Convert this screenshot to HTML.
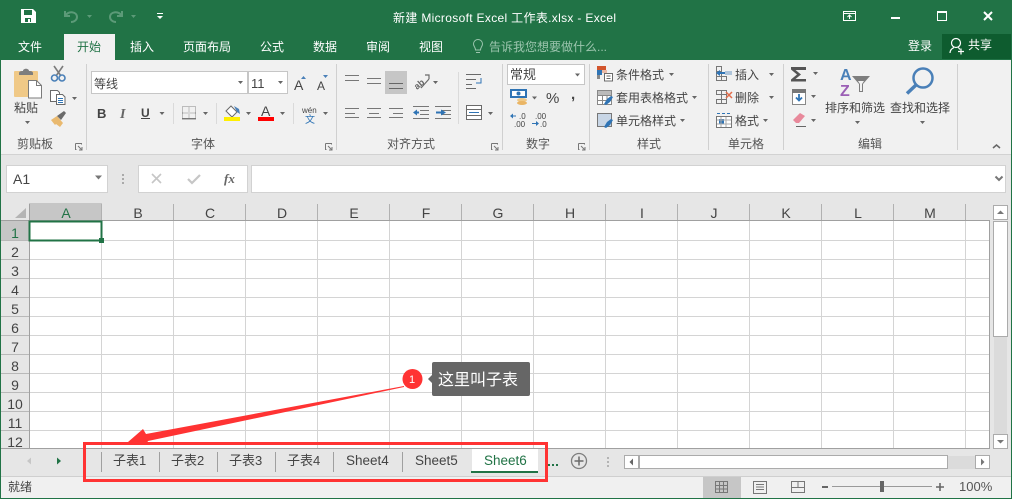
<!DOCTYPE html>
<html><head><meta charset="utf-8"><style>
html,body{margin:0;padding:0;background:#f1f1f1;width:1012px;height:499px;overflow:hidden}
svg{display:block}
text{font-family:"Liberation Sans","Noto Sans CJK SC",sans-serif;font-size:12px;fill:#444}
.h text{font-size:14px;fill:#444;text-anchor:middle}
.tab text{font-size:13px;fill:#444}
</style></head><body>
<svg width="1012" height="499" viewBox="0 0 1012 499" xmlns="http://www.w3.org/2000/svg">
<!-- base -->
<rect width="1012" height="499" fill="#e6e6e6"/>
<rect y="0" width="1012" height="60" fill="#217346"/>
<rect y="60" width="1012" height="94" fill="#f1f1f1"/>
<rect y="154" width="1012" height="1" fill="#d2d2d2"/>
<rect x="64" y="34" width="51" height="26" fill="#f1f1f1"/>
<rect x="942" y="34" width="69" height="25" fill="#0e5c2f"/>
<!-- title bar -->
<path d="M21 9h12l3 3v11H21z M24 10v5h8v-5z M25 18v4h6v-4z" fill="#fff" fill-rule="evenodd"/>
<rect x="28" y="19" width="2" height="3" fill="#fff"/>
<g fill="none" stroke="#5c9a78" stroke-width="2"><path d="M65 11v5h5M65 16c4-6 12-4 12 1 0 3-3 5-6 5"/><path d="M122 11v5h-5M122 16c-4-6-12-4-12 1 0 3 3 5 6 5"/></g>
<path d="M87 15h5l-2.500 3zM131 15h5l-2.500 3z" fill="#5c9a78"/>
<path d="M157 13h6v1h-6zM157 16h6l-3 3z" fill="#fff"/>
<text x="393" y="22" style="fill:#fff" textLength="223" lengthAdjust="spacing">新建 Microsoft Excel 工作表.xlsx - Excel</text>
<g fill="none" stroke="#fff"><rect x="843.500" y="11.500" width="12" height="9"/><path d="M843 13.500h13M849.500 19v-4M847.500 17l2-2 2 2"/></g>
<rect x="891" y="17" width="9" height="2" fill="#fff"/>
<path d="M937.500 11.500h9v9h-9z" fill="none" stroke="#fff"/><rect x="937" y="11" width="10" height="2" fill="#fff"/>
<path d="M984 12l8 8M992 12l-8 8" stroke="#fff" stroke-width="2" fill="none"/>
<!-- tabs -->
<text x="18" y="51" style="fill:#fff">文件</text>
<text x="130" y="51" style="fill:#fff">插入</text>
<text x="183" y="51" style="fill:#fff">页面布局</text>
<text x="260" y="51" style="fill:#fff">公式</text>
<text x="313" y="51" style="fill:#fff">数据</text>
<text x="366" y="51" style="fill:#fff">审阅</text>
<text x="419" y="51" style="fill:#fff">视图</text>
<text x="908" y="50" style="fill:#fff">登录</text>
<text x="968" y="49" style="fill:#fff">共享</text>
<text x="77" y="51" style="fill:#217346">开始</text>
<text x="489" y="51" style="fill:#9cc5ae">告诉我您想要做什么...</text>
<g fill="none" stroke="#9cc5ae"><path d="M475.500 50c0-3-2-3.500-2-6a4.500 4.500 0 0 1 9 0c0 2.500-2 3-2 6z"/><path d="M476 52.500h4"/></g>
<g fill="none" stroke="#fff" stroke-width="1.200"><circle cx="956" cy="43" r="4.500"/><path d="M950 53c0-4 3-5 4-5.500M958 47.500c1 .5 1.500 1 2 2"/><path d="M958 51.500h6M961 48.500v6"/></g>
<!-- ribbon separators -->
<path d="M86.500 64v86M336.500 64v86M502.500 64v86M589.500 64v86M708.500 64v86M783.500 64v86M957.500 64v86" stroke="#d0d0d0" fill="none"/>
<path d="M173.500 103v21M216.500 103v21M293.500 103v21M458.500 72v52" stroke="#dadada" fill="none"/>
<!-- clipboard -->
<rect x="14" y="71" width="24" height="26" rx="1" fill="#f0c987"/>
<path d="M19 73c0-2 3-2 4-2 0-3 6-3 6 0 1 0 4 0 4 2v2H19z" fill="#7e7e7e"/>
<path d="M28.500 80.500h8l5 5v12.500h-13z" fill="#fff" stroke="#7b7b7b"/><path d="M36.500 80.500v5h5" fill="none" stroke="#7b7b7b"/>
<text x="14" y="112">粘贴</text>
<g fill="none" stroke="#7b7b7b" stroke-width="1.600"><path d="M54 66l7 10M63 66l-7 10" /></g>
<g fill="none" stroke="#4a80b8" stroke-width="1.600"><circle cx="54.500" cy="78" r="3"/><circle cx="62" cy="78" r="3"/></g>
<path d="M50.500 90.500h7l2 2v2h-3v7h-6z" fill="#fff" stroke="#6a6a6a"/>
<path d="M56.500 94.500h6l2.500 2.500v7.500h-8.500z" fill="#fff" stroke="#6a6a6a"/>
<path d="M58 98.500h5M58 100.500h5M58 102.500h5" stroke="#2f74b5"/>
<path d="M51 120l6-4 6 7-3 4-4-3-1 1z" fill="#e9b96f"/><path d="M57 116l7-5 2 2-5 7z" fill="#6a6a6a"/>
<!-- font -->
<rect x="91.500" y="71.500" width="156" height="22" fill="#fff" stroke="#c6c6c6"/>
<rect x="248.500" y="71.500" width="39" height="22" fill="#fff" stroke="#c6c6c6"/>
<text x="94" y="88" style="font-size:12px">等线</text>
<text x="251" y="88" style="font-size:13px">11</text>
<text x="294" y="90" style="font-size:14px">A</text><text x="317" y="90" style="font-size:12px">A</text>
<path d="M301 79h5l-2.500-3zM323 75h5l-2.500 3z" fill="#4a80b8"/>
<text x="97" y="118" style="font-weight:bold;font-size:13px">B</text>
<text x="120" y="118" style="font-style:italic;font-family:'Liberation Serif',serif;font-size:14px;font-weight:bold;fill:#666">I</text>
<text x="141" y="117" style="font-weight:bold;font-size:12px">U</text><rect x="141" y="118" width="9" height="1" fill="#444"/>
<path d="M182.500 106.500h13v13h-13z M189 106.500v13M182.500 113h13" fill="none" stroke="#888" stroke-dasharray="1 1"/><rect x="182" y="118" width="14" height="1" fill="#777"/>
<path d="M226 111l5-5 6 6-5 5z" fill="#fff" stroke="#6a6a6a"/><path d="M234 106l5 3 1 5-3-2z" fill="#4a80b8"/>
<rect x="224" y="117" width="16" height="4" fill="#ffef00"/>
<text x="261" y="116" style="font-size:14px">A</text><rect x="258" y="117" width="16" height="4" fill="#f00"/>
<text x="302" y="113" style="font-size:8px">wén</text><text x="305" y="123" style="font-size:10px;fill:#2f74b5">文</text>
<!-- align -->
<rect x="385" y="71" width="22" height="23" fill="#c6c6c6"/>
<path d="M345 75.500h14M345 80.500h14M367 78.500h14M367 83.500h14" stroke="#777" fill="none"/>
<path d="M389 83.500h14M389 88.500h14" stroke="#666" fill="none"/>
<path d="M345 108.500h14M345 113.500h10M345 117.500h14M367 108.500h14M369 113.500h10M367 117.500h14M389 108.500h14M393 113.500h10M389 117.500h14" stroke="#777" fill="none"/>
<text transform="translate(417 90) rotate(-40)" style="font-size:9px;font-weight:bold;fill:#666">ab</text>
<path d="M421 88l8-9M425 75l4 0 0 4" stroke="#6a6a6a" fill="none" stroke-width="1.200"/>
<path d="M413 106.500h16M420 110.500h9M420 114.500h9M413 118.500h16M435 106.500h16M442 110.500h9M442 114.500h9M435 118.500h16" stroke="#777" fill="none"/>
<path d="M413 112.500l4-3v2h2v2h-2v2zM446 112.500l-5-3v2h-5v2h5v2z" fill="#2f74b5"/>
<path d="M466 74.500h15M466 79.500h10M466 84.500h6M466 88.500h10" stroke="#6a6a6a" fill="none"/>
<path d="M481 78v5h-5" stroke="#2f74b5" fill="none"/>
<rect x="466.500" y="105.500" width="15" height="14" fill="#fff" stroke="#6a6a6a"/>
<path d="M467 109.500h14M467 115.500h14" stroke="#6a6a6a" fill="none"/><path d="M469 112.500h10" stroke="#2f74b5" fill="none"/>
<!-- number -->
<rect x="507.500" y="64.500" width="77" height="20" fill="#fff" stroke="#c6c6c6"/>
<text x="510" y="79" style="font-size:13px">常规</text>
<rect x="511" y="90" width="15" height="7" fill="#fff" stroke="#2f74b5" stroke-width="2"/>
<circle cx="518.500" cy="93.500" r="2" fill="#2f74b5"/>
<ellipse cx="522" cy="100" rx="5" ry="2" fill="#f0c987"/><ellipse cx="522" cy="103" rx="5" ry="2" fill="#eab565"/>
<text x="546" y="103" style="font-size:15px">%</text>
<text x="571" y="99" style="font-weight:bold;font-size:15px">,</text>
<text x="519" y="119" style="font-size:8px">.0</text><text x="514" y="127" style="font-size:8px">.00</text>
<text x="535" y="119" style="font-size:8px">.00</text><text x="540" y="127" style="font-size:8px">.0</text>
<path d="M510 116l3-2.500v2h3v1h-3v2zM539 123.500l-3-2.500v2h-4v1h4v2z" fill="#2f74b5"/>
<!-- styles -->
<rect x="597" y="66" width="9" height="4" fill="#d2552d"/><rect x="597" y="70" width="5" height="5" fill="#2f74b5"/><rect x="602" y="70" width="5" height="3" fill="#eab9a5"/><rect x="597" y="75" width="3" height="4" fill="#888"/>
<rect x="604.500" y="73.500" width="8" height="7.500" fill="#fff" stroke="#6a6a6a"/><path d="M606.500 76h4M606.500 78.500h4" stroke="#666"/>
<path d="M597.500 90.500h14v14h-14zM597.500 95.500h14M597.500 100.500h14M602.500 90.500v14M607 90.500v14" fill="#fff" stroke="#888"/><rect x="598" y="91" width="13" height="4" fill="#bbb"/>
<path d="M604 104l3-5 4-3 2 1-3 5-4 3z" fill="#2f74b5"/>
<rect x="597.500" y="113.500" width="14" height="13" fill="#c8d6e6" stroke="#777"/>
<path d="M604 127l3-5 4-3 2 1-3 5-4 3z" fill="#2f74b5"/>
<text x="616" y="79">条件格式</text><text x="616" y="102">套用表格格式</text><text x="616" y="125">单元格样式</text>
<!-- cells -->
<path d="M716.500 66.500h5v5h-5zM716.500 71.500h5v5h-5zM716.500 76.500h5v4h-5zM721.500 76.500h5v4h-5z" fill="none" stroke="#777"/>
<rect x="725" y="71" width="7" height="4" fill="#aec4da"/><path d="M716 73l4-3v2h5v2h-5v2z" fill="#2f74b5"/>
<path d="M716.500 90.500h5v4h-5zM721.500 90.500h5v4h-5zM716.500 99.500h5v4h-5zM721.500 99.500h5v4h-5zM721.500 94.500h5v5h-5z" fill="none" stroke="#777"/>
<path d="M726 92l6 6M732 92l-6 6" stroke="#e46c4a" stroke-width="1.500"/>
<rect x="716.500" y="116.500" width="15" height="11" fill="#fff" stroke="#777"/><rect x="719" y="119" width="5" height="5" fill="#2f74b5"/>
<path d="M717 120h14M717 124h14M721 117v10M726 117v10" stroke="#aaa"/>
<path d="M717 113.500h14" stroke="#2f74b5" stroke-dasharray="3 2"/>
<text x="735" y="79">插入</text><text x="735" y="102">删除</text><text x="735" y="125">格式</text>
<!-- editing -->
<path d="M791 67h15v3h-10.500l5.500 4.500-5.500 4.500h10.500v2.500h-15v-2l6-5-6-5z" fill="#555"/>
<rect x="792.500" y="89.500" width="13" height="15" fill="#fff" stroke="#888"/><rect x="792" y="89" width="14" height="4" fill="#777"/>
<path d="M799 94v6M796 97.500l3 3 3-3" fill="none" stroke="#2f74b5" stroke-width="1.800"/>
<path d="M793 120l7-7 5 3-6 7h-3z" fill="#e8899b"/><path d="M796 126.500h10" stroke="#666"/>
<text x="840" y="80" style="font-size:16px;font-weight:bold;fill:#4a80b8">A</text><text x="840" y="96" style="font-size:16px;font-weight:bold;fill:#9b5fb5">Z</text>
<path d="M852 76h18l-7 8v8h-4v-8z" fill="#7e7e7e"/><path d="M858 81h6l-2 3v7h-2v-7z" fill="#f1f1f1"/>
<circle cx="923" cy="78" r="9.500" fill="none" stroke="#4a80b8" stroke-width="2.500"/><path d="M916 85l-9 8.500" stroke="#4a80b8" stroke-width="3.500"/>
<text x="825" y="112">排序和筛选</text><text x="890" y="112">查找和选择</text>
<!-- group labels -->
<text x="17" y="148" style="fill:#555">剪贴板</text><text x="191" y="148" style="fill:#555">字体</text><text x="387" y="148" style="fill:#555">对齐方式</text><text x="526" y="148" style="fill:#555">数字</text><text x="637" y="148" style="fill:#555">样式</text><text x="728" y="148" style="fill:#555">单元格</text><text x="858" y="148" style="fill:#555">编辑</text>
<path d="M75.500 143.500h6v1M75.500 143.500v6h1M325.500 143.500h6v1M325.500 143.500v6h1M491.500 143.500h6v1M491.500 143.500v6h1M578.500 143.500h6v1M578.500 143.500v6h1" stroke="#777" fill="none"/>
<path d="M78 146l4 4M82 147v3h-3M328 146l4 4M332 147v3h-3M494 146l4 4M498 147v3h-3M581 146l4 4M585 147v3h-3" stroke="#777" fill="none"/>
<path d="M993 148l3.500-3 3.500 3" stroke="#666" stroke-width="1.500" fill="none"/>
<!-- carets -->
<path d="M25 121h5l-2.500 3zM72 97h5l-2.500 3zM159.500 112h5l-2.500 3zM203 112h5l-2.500 3zM246 112h5l-2.500 3zM280 112h5l-2.500 3zM323 112h5l-2.500 3zM238 81h5l-2.500 3zM278 81h5l-2.500 3zM433 81h5l-2.500 3zM488 112h5l-2.500 3zM575 73.500h5l-2.500 3zM532 96.500h5l-2.500 3zM669 73h5l-2.500 3zM692 96h5l-2.500 3zM680 119h5l-2.500 3zM769 73h5l-2.500 3zM769 96h5l-2.500 3zM763 119h5l-2.500 3zM813 72h5l-2.500 3zM811 95h5l-2.500 3zM811 119h5l-2.500 3zM855 121h5l-2.500 3zM920 121h5l-2.500 3z" fill="#666"/>
<!-- formula bar -->
<rect x="6.500" y="165.500" width="101" height="27" fill="#fff" stroke="#d2d2d2"/>
<text x="13" y="184" style="font-size:14px">A1</text>
<path d="M95 175.500h7l-3.500 4z" fill="#777"/>
<rect x="122" y="174" width="2" height="2" fill="#aaa"/><rect x="122" y="178" width="2" height="2" fill="#aaa"/><rect x="122" y="182" width="2" height="2" fill="#aaa"/>
<rect x="138.500" y="165.500" width="109" height="27" fill="#fff" stroke="#d2d2d2"/>
<path d="M152 174l9 9M161 174l-9 9" stroke="#c6c6c6" stroke-width="1.600" fill="none"/>
<path d="M188 179l4 4 8-8" stroke="#c6c6c6" stroke-width="2.200" fill="none"/>
<text x="224" y="183" style="font-family:'Liberation Serif',serif;font-style:italic;font-weight:bold;font-size:13px;fill:#666">fx</text>
<rect x="251.500" y="165.500" width="754" height="27" fill="#fff" stroke="#d2d2d2"/>
<path d="M995.500 176.500l3.500 3.500 3.500-3.500" stroke="#777" stroke-width="2" fill="none"/>
<!-- sheet -->
<rect x="29" y="221" width="960" height="227" fill="#fff"/>
<rect x="29" y="203" width="73" height="18" fill="#c6c6c6"/>
<rect x="1" y="221" width="28" height="19" fill="#c6c6c6"/>
<path d="M29 240.500H989M29 259.500H989M29 278.500H989M29 297.500H989M29 316.500H989M29 335.500H989M29 354.500H989M29 373.500H989M29 392.500H989M29 411.500H989M29 430.500H989M101.500 221V448M173.500 221V448M245.500 221V448M317.500 221V448M389.500 221V448M461.500 221V448M533.500 221V448M605.500 221V448M677.500 221V448M749.500 221V448M821.500 221V448M893.500 221V448M965.500 221V448" stroke="#d4d4d4" fill="none"/>
<path d="M1 240.500H29M1 259.500H29M1 278.500H29M1 297.500H29M1 316.500H29M1 335.500H29M1 354.500H29M1 373.500H29M1 392.500H29M1 411.500H29M1 430.500H29" stroke="#b9b9b9" fill="none"/>
<path d="M101.500 204V220M173.500 204V220M245.500 204V220M317.500 204V220M389.500 204V220M461.500 204V220M533.500 204V220M605.500 204V220M677.500 204V220M749.500 204V220M821.500 204V220M893.500 204V220M965.500 204V220" stroke="#b1b1b1" fill="none"/>
<path d="M1 220.500H989.500V448.500H0M29.500 204V448" stroke="#a0a0a0" fill="none"/>
<path d="M26 208v10H15z" fill="#b4b4b4"/>
<g class="h">
<text x="66" y="218" style="fill:#217346">A</text><text x="138" y="218">B</text><text x="210" y="218">C</text><text x="282" y="218">D</text><text x="354" y="218">E</text><text x="426" y="218">F</text><text x="498" y="218">G</text><text x="570" y="218">H</text><text x="642" y="218">I</text><text x="714" y="218">J</text><text x="786" y="218">K</text><text x="858" y="218">L</text><text x="930" y="218">M</text>
<text x="15" y="238" style="fill:#217346">1</text><text x="15" y="257">2</text><text x="15" y="276">3</text><text x="15" y="295">4</text><text x="15" y="314">5</text><text x="15" y="333">6</text><text x="15" y="352">7</text><text x="15" y="371">8</text><text x="15" y="390">9</text><text x="15" y="409">10</text><text x="15" y="428">11</text><text x="15" y="447">12</text>
</g>
<rect x="29.500" y="221.500" width="72" height="19" fill="none" stroke="#217346" stroke-width="2"/>
<rect x="99" y="238" width="5" height="5" fill="#217346"/>
<!-- vertical scrollbar -->
<rect x="994" y="221" width="13" height="213" fill="#dbdbdb"/>
<rect x="993.500" y="205.500" width="14" height="14" fill="#fff" stroke="#ababab"/>
<path d="M997 214h7l-3.500-3.500z" fill="#777"/>
<rect x="993.500" y="221.500" width="14" height="115" fill="#fff" stroke="#ababab"/>
<rect x="993.500" y="434.500" width="14" height="14" fill="#fff" stroke="#ababab"/>
<path d="M997 440h7l-3.500 3.500z" fill="#777"/>
<!-- tabs bar -->
<path d="M27 461l4-3.500v7z" fill="#c6c6c6"/>
<path d="M61 461l-4-3.500v7z" fill="#217346"/>
<path d="M101.500 452v20M159.500 452v20M217.500 452v20M275.500 452v20M333.500 452v20M402.500 452v20" stroke="#a0a0a0" fill="none"/>
<rect x="472" y="449" width="66" height="22" fill="#fff"/>
<rect x="471" y="471" width="67" height="2" fill="#217346"/>
<g class="tab">
<text x="113" y="465">子表1</text><text x="171" y="465">子表2</text><text x="229" y="465">子表3</text><text x="287" y="465">子表4</text>
<text x="346" y="465" style="font-size:13.500px">Sheet4</text><text x="415" y="465" style="font-size:13.500px">Sheet5</text><text x="484" y="465" style="fill:#217346;font-size:13.500px">Sheet6</text>
</g>
<path d="M548 464h2v2h-2zM552 464h2v2h-2zM556 464h2v2h-2z" fill="#217346"/>
<circle cx="579" cy="461" r="7.500" fill="none" stroke="#7e7e7e" stroke-width="1.300"/>
<path d="M579 456.500v9M574.500 461h9" stroke="#6a6a6a" stroke-width="1.500" fill="none"/>
<path d="M607 457h2v2h-2zM607 461h2v2h-2zM607 465h2v2h-2z" fill="#b4b4b4"/>
<rect x="624.500" y="455.500" width="14" height="13" fill="#fff" stroke="#ababab"/>
<path d="M633 458.500v7l-3.500-3.500z" fill="#666"/>
<rect x="639.500" y="455.500" width="308" height="13" fill="#fff" stroke="#ababab"/>
<rect x="948" y="456" width="28" height="13" fill="#dbdbdb"/>
<rect x="975.500" y="455.500" width="14" height="13" fill="#fff" stroke="#ababab"/>
<path d="M981 458.500v7l3.500-3.500z" fill="#777"/>
<!-- status bar -->
<rect y="476" width="1012" height="22" fill="#f0f0f0"/>
<rect y="476" width="1012" height="1" fill="#cfcfcf"/>
<rect x="703" y="477" width="38" height="21" fill="#c6c6c6"/>
<text x="8" y="491">就绪</text>
<path d="M715.500 481.500h12v11h-12zM719.500 481.500v11M723.500 481.500v11M715.500 485.500h12M715.500 489h12" fill="none" stroke="#777"/>
<rect x="753.500" y="481.500" width="13" height="12" fill="none" stroke="#777"/><path d="M756 484.500h8M756 487h8M756 489.500h8" stroke="#777"/>
<path d="M791.500 481.500h13v11h-13zM791.500 487.500h6.500v-6M798 481.500v6h6.500" fill="none" stroke="#777"/>
<rect x="822" y="486" width="6" height="2" fill="#666"/>
<rect x="832" y="486" width="100" height="1" fill="#9a9a9a"/>
<rect x="880" y="481" width="4" height="11" fill="#666"/>
<path d="M936 487h8M940 483v8" stroke="#666" stroke-width="1.600" fill="none"/>
<text x="959" y="491" style="font-size:13px;fill:#555">100%</text>
<!-- window frame -->
<rect x="0" y="60" width="1" height="439" fill="#217346"/>
<rect x="1011" y="60" width="1" height="439" fill="#217346"/>
<rect y="498" width="1012" height="1" fill="#217346"/>
<!-- annotation -->
<rect x="84.500" y="443.500" width="462" height="37" fill="none" stroke="#f33" stroke-width="3"/>
<path d="M128 442L143 429L146 434L404 386L404 387L148 441L146 445Z" fill="#f33"/>
<path d="M432 375l-4 4 4 4z" fill="#666"/>
<rect x="432" y="362" width="98" height="34" rx="2" fill="#666"/>
<text x="438" y="385" style="font-size:16px;fill:#fff">这里叫子表</text>
<circle cx="412.500" cy="379" r="10" fill="#f33"/>
<text x="409" y="383" style="font-size:11px;fill:#fff">1</text>
</svg>
</body></html>
